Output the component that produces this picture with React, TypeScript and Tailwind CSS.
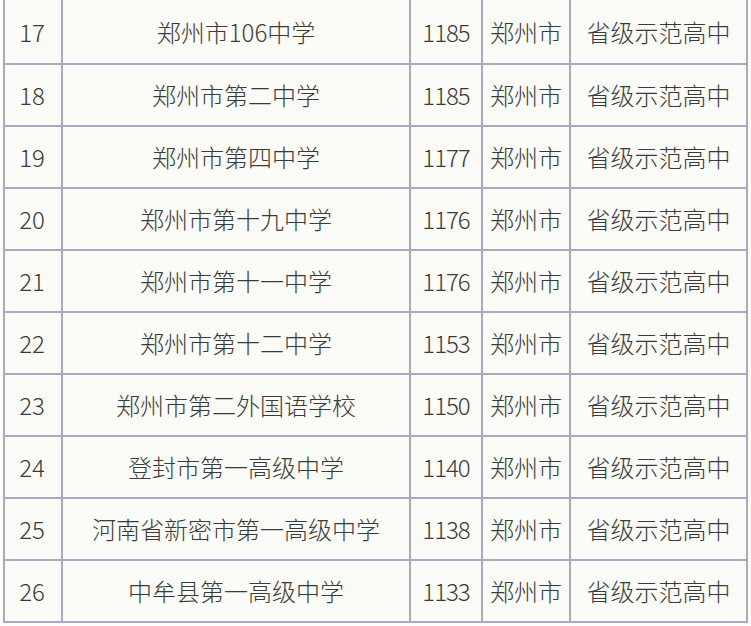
const rows = [
  { no: "17", name: "郑州市106中学", score: "1185" },
  { no: "18", name: "郑州市第二中学", score: "1185" },
  { no: "19", name: "郑州市第四中学", score: "1177" },
  { no: "20", name: "郑州市第十九中学", score: "1176" },
  { no: "21", name: "郑州市第十一中学", score: "1176" },
  { no: "22", name: "郑州市第十二中学", score: "1153" },
  { no: "23", name: "郑州市第二外国语学校", score: "1150" },
  { no: "24", name: "登封市第一高级中学", score: "1140" },
  { no: "25", name: "河南省新密市第一高级中学", score: "1138" },
  { no: "26", name: "中牟县第一高级中学", score: "1133" },
];

export default function App() {
  return (
    <div
      className="w-[751px] h-[626px] overflow-hidden bg-[#fdfdfc] text-[#3a3a3a] text-[24px] leading-none font-light"
      style={{ fontFamily: '"Noto Sans CJK SC", "Noto Sans", sans-serif' }}
    >
      <div className="ml-[3px] w-[745px] border-x-2 border-[#aba8c4] bg-[#fbfbf8]">
        {rows.map((r, i) => (
          <div
            key={r.no}
            className={`grid grid-cols-[58px_348px_72px_88px_1fr] border-b-2 border-[#aba8c4] ${i === 0 ? "h-[65px]" : "h-[62px]"}`}
          >
            <div className="flex items-center justify-center border-r-2 border-[#aba8c4] pr-[2px]">{r.no}</div>
            <div className="flex items-center justify-center border-r-2 border-[#aba8c4]">{r.name}</div>
            <div className="flex items-center justify-center border-r-2 border-[#aba8c4] tracking-[-1px]">{r.score}</div>
            <div className="flex items-center justify-center border-r-2 border-[#aba8c4]">郑州市</div>
            <div className="flex items-center justify-center">省级示范高中</div>
          </div>
        ))}
      </div>
    </div>
  );
}
